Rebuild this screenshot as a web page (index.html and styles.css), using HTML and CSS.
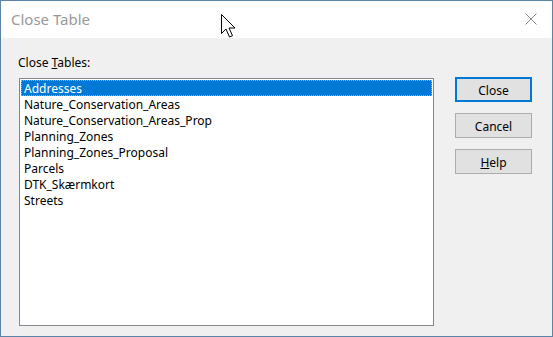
FILE: index.html
```html
<!DOCTYPE html>
<html>
<head>
<meta charset="utf-8">
<link rel="stylesheet" href="styles.css">
</head>
<body>
<div class="window">
  <div class="titlebar">
    <span class="title">Close Table</span>
    <svg class="close-x" width="12" height="12" viewBox="0 0 12 12"><path d="M0.5 0.5 L11.5 11.5 M11.5 0.5 L0.5 11.5" stroke="#8a8a8a" stroke-width="1"/></svg>
  </div>
  <div class="content">
    <div class="left">
      <div class="label">Close <u>T</u>ables:</div>
      <div class="listbox">
        <div class="item selected">Addresses</div>
        <div class="item">Nature_Conservation_Areas</div>
        <div class="item">Nature_Conservation_Areas_Prop</div>
        <div class="item">Planning_Zones</div>
        <div class="item">Planning_Zones_Proposal</div>
        <div class="item">Parcels</div>
        <div class="item">DTK_Skærmkort</div>
        <div class="item">Streets</div>
      </div>
    </div>
    <div class="buttons">
      <div class="btn default">Close</div>
      <div class="btn">Cancel</div>
      <div class="btn"><u>H</u>elp</div>
    </div>
  </div>
  <svg class="cursor" width="18" height="26" viewBox="0 0 18 26"><path d="M0.5 0.5 L0.5 19.5 L5 15 L8.5 23 L11.5 21.7 L8 14 L14 14 Z" fill="#fff" stroke="#000" stroke-width="1" stroke-linejoin="miter"/></svg>
</div>
</body>
</html>
```
FILE: styles.css
```css
html, body { margin: 0; padding: 0; }
body { width: 553px; height: 337px; overflow: hidden; font-family: "Noto Sans", "Segoe UI", sans-serif; font-size: 12px; color: #000; }
.window { position: relative; width: 553px; height: 337px; box-sizing: border-box; border: 1px solid #5c84a8; background: #f0f0f0; display: flex; flex-direction: column; }
.titlebar { height: 37px; background: #fff; display: flex; align-items: center; justify-content: space-between; padding: 0 15px 0 10px; flex: none; }
.title { font-size: 15px; color: #999; margin-top: -2px; }
.close-x { margin-top: -1px; }
.content { flex: 1; display: flex; padding: 15px 20px 0 17px; }
.left { display: flex; flex-direction: column; }
.label { height: 18px; line-height: 17px; padding-top: 1px; box-sizing: border-box; margin-bottom: 7px; }
.listbox { margin-left: 1px; width: 415px; height: 248px; box-sizing: border-box; border: 1px solid #828790; background: #fff; padding: 1px; }
.item { height: 16px; line-height: 14px; padding: 2px 0 0 3px; white-space: nowrap; box-sizing: border-box; }
.item.selected { background: #0078d7; color: #fff; outline: 1px dotted #f0a040; outline-offset: -1px; }
.buttons { margin-left: 21px; display: flex; flex-direction: column; gap: 11px; margin-top: 24px; }
.btn { width: 77px; height: 25px; box-sizing: border-box; border: 1px solid #adadad; background: #e1e1e1; display: flex; align-items: center; justify-content: center; padding-top: 1px; }
.btn.default { border: 2px solid #0078d7; }
.cursor { position: absolute; left: 220px; top: 13px; }
```
